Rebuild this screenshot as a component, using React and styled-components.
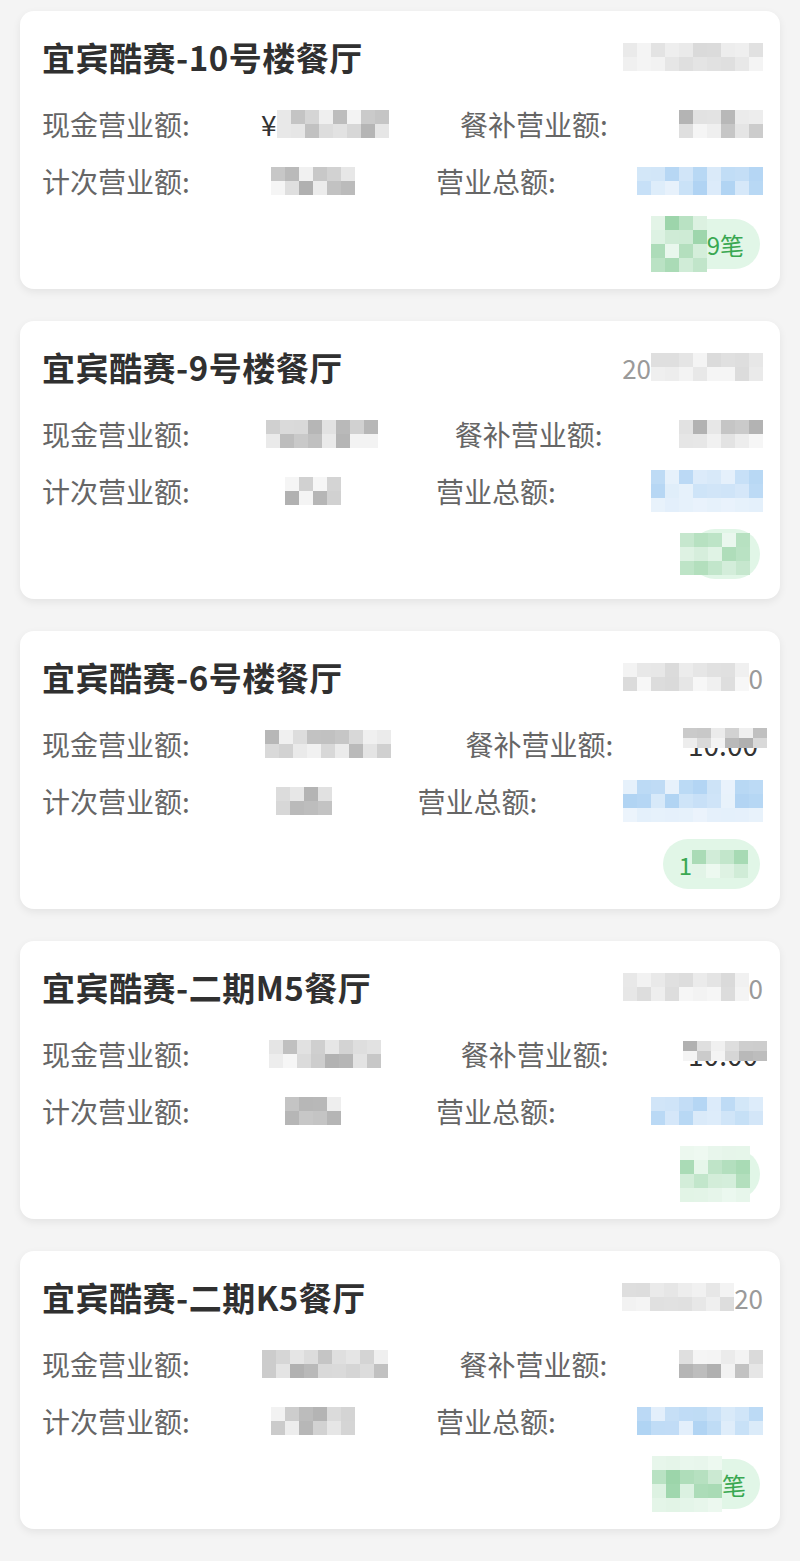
import React from "react";
import styled, { createGlobalStyle } from "styled-components";

const GlobalStyle = createGlobalStyle`
  html, body {
    margin: 0;
    padding: 0;
    background: #f4f4f4;
  }
  body {
    font-family: "Noto Sans CJK SC", "Noto Sans", sans-serif;
  }
`;

const Page = styled.div`
  display: flex;
  flex-direction: column;
  gap: 32px;
  padding: 11px 20px 32px;
`;

const Card = styled.div`
  background: #fff;
  border-radius: 14px;
  box-shadow: 0 3px 8px rgba(0, 0, 0, 0.07);
  height: 278px;
  box-sizing: border-box;
  padding: 26px 17px 0 22px;
  display: flex;
  flex-direction: column;
`;

const Header = styled.div`
  display: flex;
  justify-content: space-between;
  align-items: center;
  height: 40px;
`;

const Title = styled.h2`
  margin: 0;
  font-size: 33px;
  font-weight: 700;
  line-height: 40px;
  letter-spacing: 0.5px;
  color: #303030;
`;

const DateText = styled.span`
  display: inline-flex;
  align-items: center;
  font-size: 26px;
  color: #9a9a9a;
`;

const Row = styled.div`
  display: flex;
  justify-content: space-between;
  align-items: center;
  height: 40px;
  margin-top: ${(p) => p.$gap}px;
`;

const Label = styled.span`
  font-size: 28px;
  line-height: 40px;
  color: #666;
`;

const Value = styled.span`
  display: inline-flex;
  align-items: center;
  height: 40px;
  font-size: 28px;
  color: #333;
`;

const Covered = styled.span`
  position: relative;
  display: inline-block;
  line-height: 40px;
  padding-right: 5px;
`;

const Cover = styled.span`
  position: absolute;
  display: flex;
  line-height: 0;
  left: -5px;
  right: 0;
  top: ${(p) => p.$top}px;
`;

const Footer = styled.div`
  display: flex;
  justify-content: flex-end;
  margin-top: 18px;
  padding-right: 3px;
`;

const Badge = styled.span`
  display: inline-flex;
  align-items: center;
  height: 50px;
  padding: 0 ${(p) => p.$pr}px 0 ${(p) => p.$pl}px;
  border-radius: 25px;
  background: #e1f6e7;
  color: #3aa852;
  font-size: 24px;
  white-space: nowrap;
`;

const BadgeMask = styled.span`
  display: inline-flex;
  margin-left: ${(p) => p.$ml}px;
`;

const Grid = styled.span`
  display: inline-grid;
  vertical-align: middle;
  grid-template-columns: repeat(${(p) => p.$cols}, 14px);
  grid-auto-rows: ${(p) => p.$h}px;
`;

const Cell = styled.span`
  background: ${(p) => p.$c};
`;

const tones = {
  gray: [[246, 246, 246], [168, 168, 168]],
  light: [[248, 248, 248], [214, 214, 214]],
  blue: [[236, 244, 252], [168, 207, 242]],
  green: [[238, 249, 241], [147, 209, 162]],
};

function rng(seed) {
  let s = seed * 7919 + 13;
  return () => {
    s = (s * 9301 + 49297) % 233280;
    return s / 233280;
  };
}

function Mosaic({ cols, rows = 2, tone = "gray", seed = 1, h = 14, fade = false }) {
  const r = rng(seed);
  const [lo, hi] = tones[tone];
  const cells = [];
  for (let y = 0; y < rows; y++) {
    for (let x = 0; x < cols; x++) {
      let t = r() * 0.9;
      if (fade && (y === rows - 1 || (y === 0 && rows > 3))) t *= 0.15;
      const c = lo.map((v, i) => Math.round(v + (hi[i] - v) * t));
      cells.push(<Cell key={y + "-" + x} $c={`rgb(${c.join(",")})`} />);
    }
  }
  return (
    <Grid $cols={cols} $h={h}>
      {cells}
    </Grid>
  );
}

function Masked({ pre, post, cols, tone, seed, rows, fade }) {
  return (
    <>
      {pre}
      <Mosaic cols={cols} tone={tone} seed={seed} rows={rows} fade={fade} />
      {post}
    </>
  );
}

const cards = [
  {
    title: "宜宾酷赛-10号楼餐厅",
    date: { cols: 10 },
    cash: { pre: "¥", cols: 8 },
    meal: { cols: 6 },
    count: { cols: 6 },
    total: { cols: 9 },
    badge: { cols: 4, rows: 4, ml: -12, text: "9笔", pl: 0, pr: 16 },
  },
  {
    title: "宜宾酷赛-9号楼餐厅",
    date: { pre: "20", cols: 8 },
    cash: { cols: 8 },
    meal: { cols: 6 },
    count: { cols: 4 },
    total: { cols: 8, rows: 3, fade: true },
    badge: { cols: 5, rows: 3, ml: -10, text: "", pl: 0, pr: 10 },
  },
  {
    title: "宜宾酷赛-6号楼餐厅",
    date: { cols: 9, post: "0" },
    cash: { cols: 9 },
    meal: { text: "10.00", top: 4 },
    count: { cols: 4 },
    total: { cols: 10, rows: 3, fade: true },
    badge: { pre: "1", cols: 4, rows: 2, ml: 0, text: "", pl: 16, pr: 12 },
  },
  {
    title: "宜宾酷赛-二期M5餐厅",
    date: { cols: 9, post: "0" },
    cash: { cols: 8 },
    meal: { text: "10.00", top: 7 },
    count: { cols: 4 },
    total: { cols: 8 },
    badge: { cols: 5, rows: 4, ml: -10, text: "", pl: 0, pr: 10, fade: true },
  },
  {
    title: "宜宾酷赛-二期K5餐厅",
    date: { cols: 8, post: "20" },
    cash: { cols: 9 },
    meal: { cols: 6 },
    count: { cols: 6 },
    total: { cols: 9 },
    badge: { cols: 5, rows: 4, ml: -10, text: "笔", pl: 0, pr: 14, fade: true },
  },
];

function MealValue({ meal, seed }) {
  if (!meal.text) {
    return <Masked cols={meal.cols} seed={seed} />;
  }
  return (
    <Covered>
      {meal.text}
      <Cover $top={meal.top}>
        <Mosaic cols={6} seed={seed} h={10} />
      </Cover>
    </Covered>
  );
}

function StatCard({ card, idx }) {
  const s = idx * 10;
  const b = card.badge;
  return (
    <Card>
      <Header>
        <Title>{card.title}</Title>
        <DateText>
          <Masked {...card.date} tone="light" seed={s + 1} />
        </DateText>
      </Header>
      <Row $gap={27}>
        <Label>现金营业额:</Label>
        <Value>
          <Masked {...card.cash} seed={s + 2} />
        </Value>
        <Label>餐补营业额:</Label>
        <Value>
          <MealValue meal={card.meal} seed={s + 3} />
        </Value>
      </Row>
      <Row $gap={17}>
        <Label>计次营业额:</Label>
        <Value>
          <Masked {...card.count} seed={s + 4} />
        </Value>
        <Label>营业总额:</Label>
        <Value>
          <Masked {...card.total} tone="blue" seed={s + 5} />
        </Value>
      </Row>
      <Footer>
        <Badge $pl={b.pl} $pr={b.pr}>
          {b.pre}
          <BadgeMask $ml={b.ml}>
            <Mosaic cols={b.cols} rows={b.rows} tone="green" seed={s + 6} fade={b.fade} />
          </BadgeMask>
          {b.text}
        </Badge>
      </Footer>
    </Card>
  );
}

export default function App() {
  return (
    <>
      <GlobalStyle />
      <Page>
        {cards.map((c, i) => (
          <StatCard key={c.title} card={c} idx={i} />
        ))}
      </Page>
    </>
  );
}
